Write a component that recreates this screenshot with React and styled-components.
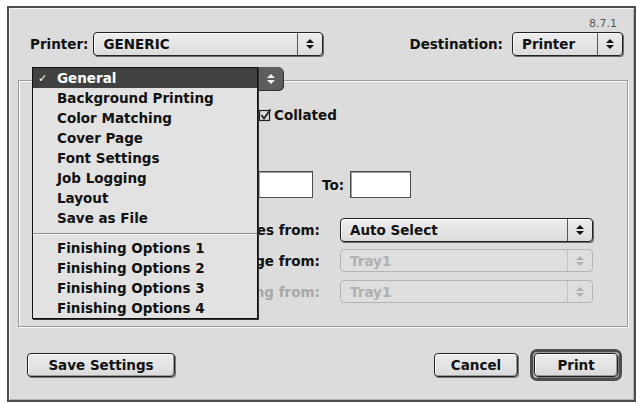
import React from 'react';
import styled, { createGlobalStyle } from 'styled-components';

const GlobalStyle = createGlobalStyle`
  body {
    margin: 0;
    background: #ffffff;
    font-family: "DejaVu Sans", "Liberation Sans", sans-serif;
    color: #111111;
  }
`;

const Window = styled.div`
  box-sizing: border-box;
  width: 629px;
  height: 396px;
  margin: 6px 0 0 7px;
  border: 2px solid #4c4c4c;
  background: #dcdcdc;
  box-shadow: inset 1px 1px 0 #f4f4f4, inset -1px -1px 0 #b0b0b0;
  display: flex;
  flex-direction: column;
`;

const VersionRow = styled.div`
  padding: 11px 17px 0 0;
  height: 10px;
  line-height: 10px;
  font-size: 11px;
  color: #555555;
  text-align: right;
`;

const TopRow = styled.div`
  display: flex;
  align-items: center;
  height: 24px;
  margin-top: 3px;
  padding: 0 11px 0 21px;
`;

const Label = styled.span`
  font-size: 13.5px;
  font-weight: bold;
  white-space: nowrap;
  color: ${(p) => (p.dim ? '#a8a8a8' : '#111111')};
  margin-right: ${(p) => p.gap || 0}px;
  margin-left: ${(p) => (p.push ? 'auto' : '0')};
  text-align: ${(p) => (p.right ? 'right' : 'left')};
`;

const PopupBox = styled.div`
  box-sizing: border-box;
  display: flex;
  align-items: stretch;
  width: ${(p) => p.width}px;
  height: ${(p) => (p.disabled ? 23 : 24)}px;
  border: 1px solid ${(p) => (p.disabled ? '#b4b4b4' : '#222222')};
  border-radius: 4px;
  background: ${(p) => (p.disabled ? '#dedede' : 'linear-gradient(#ededed, #dcdcdc)')};
  box-shadow: ${(p) => (p.disabled ? 'none' : '1px 1px 0 #6a6a6a, inset 1px 1px 0 #fafafa')};
  font-size: 13.5px;
  font-weight: bold;
  color: ${(p) => (p.disabled ? '#b0b0b0' : '#111111')};
`;

const PopupText = styled.div`
  flex: 1;
  display: flex;
  align-items: center;
  padding-left: 9px;
  white-space: nowrap;
`;

const PopupArrow = styled.div`
  width: 24px;
  display: flex;
  align-items: center;
  justify-content: center;
  border-left: 1px solid ${(p) => (p.disabled ? '#c4c4c4' : '#555555')};
`;

const Arrows = ({ color }) => (
  <svg width="8" height="12" viewBox="0 0 8 12">
    <polygon points="0,5 4,1 8,5" fill={color} />
    <polygon points="0,7 4,11 8,7" fill={color} />
  </svg>
);

const Popup = ({ width, value, disabled }) => (
  <PopupBox width={width} disabled={disabled}>
    <PopupText>{value}</PopupText>
    <PopupArrow disabled={disabled}>
      <Arrows color={disabled ? '#b0b0b0' : '#111111'} />
    </PopupArrow>
  </PopupBox>
);

const PanelArea = styled.div`
  position: relative;
  margin-top: 24px;
`;

const Panel = styled.div`
  box-sizing: border-box;
  height: 247px;
  margin: 0 6px 0 9px;
  border: 1px solid #9a9a9a;
  box-shadow: inset 1px 1px 0 #fafafa, 1px 1px 0 #fafafa;
  display: flex;
  flex-direction: column;
`;

const PanelRow = styled.div`
  display: flex;
  align-items: center;
  height: ${(p) => p.h}px;
  margin-top: ${(p) => p.top}px;
  padding-left: 21px;
`;

const Group = styled.div`
  width: ${(p) => p.width}px;
  display: flex;
  align-items: center;
  justify-content: flex-end;
  gap: 10px;
  padding-right: 10px;
  box-sizing: border-box;
`;

const Field = styled.div`
  box-sizing: border-box;
  width: ${(p) => p.width}px;
  height: ${(p) => p.h || 27}px;
  background: #ffffff;
  border: 1px solid #4a4a4a;
  box-shadow: inset 1px 1px 0 #a0a0a0;
  margin-right: ${(p) => p.gap || 0}px;
`;

const Radio = styled.span`
  box-sizing: border-box;
  width: 12px;
  height: 12px;
  border-radius: 50%;
  border: 1px solid #222;
  background: ${(p) => (p.on ? 'radial-gradient(#111 0 3px, #fff 3.5px)' : '#fff')};
`;

const CheckLabel = styled.label`
  display: flex;
  align-items: center;
  gap: 2px;
  font-size: 13.5px;
  font-weight: bold;
`;

const CheckIcon = () => (
  <svg width="14" height="14" viewBox="0 0 14 14">
    <rect x="1.5" y="2.5" width="10" height="10" fill="none" stroke="#222" strokeWidth="1.2" />
    <path d="M3.5 7 L6 10.5 L12.5 1.5" fill="none" stroke="#222" strokeWidth="1.8" />
  </svg>
);

const SourceGrid = styled.div`
  display: grid;
  grid-template-columns: 280px 253px;
  grid-auto-rows: 25px;
  column-gap: 20px;
  row-gap: 6px;
  margin-top: 20px;
  padding-left: 21px;
  align-items: start;

  & > span {
    line-height: 24px;
  }
`;

const PagePopup = styled.div`
  position: absolute;
  left: 23px;
  top: -13px;
  box-sizing: border-box;
  width: 251px;
  height: 23px;
  border-radius: 0 5px 5px 0;
  background: #4a4a4a;
  display: flex;
  justify-content: flex-end;
`;

const PagePopupArrow = styled.div`
  width: 25px;
  display: flex;
  align-items: center;
  justify-content: center;
  border-radius: 0 5px 5px 0;
  background: #5e5e5e;
  box-shadow: 1px 1px 0 #333;
`;

const Menu = styled.div`
  position: absolute;
  left: 23px;
  top: -13px;
  z-index: 2;
  box-sizing: border-box;
  width: 226px;
  background: #e2e2e2;
  border: 1px solid #111111;
  box-shadow: 1px 1px 0 #333333;
`;

const MenuItem = styled.div`
  display: flex;
  align-items: center;
  height: 20px;
  font-size: 13.5px;
  font-weight: bold;
  white-space: nowrap;
  background: ${(p) => (p.active ? '#414141' : 'transparent')};
  color: ${(p) => (p.active ? '#ffffff' : '#111111')};
`;

const CheckCell = styled.span`
  box-sizing: border-box;
  width: 24px;
  padding-left: 5px;
  font-size: 11px;
`;

const Separator = styled.div`
  height: 10px;
  display: flex;
  align-items: center;

  &::after {
    content: '';
    flex: 1;
    height: 1px;
    background: #8c8c8c;
    box-shadow: 0 1px 0 #f8f8f8;
  }
`;

const ButtonRow = styled.div`
  display: flex;
  align-items: center;
  height: 32px;
  margin-top: 22px;
  padding: 0 12px 0 18px;
`;

const Button = styled.button`
  box-sizing: border-box;
  width: ${(p) => p.width}px;
  height: 24px;
  margin-left: ${(p) => (p.push ? 'auto' : '0')};
  margin-right: ${(p) => p.gap || 0}px;
  border: 1px solid #222222;
  border-radius: 4px;
  background: linear-gradient(#ececec, #dadada);
  box-shadow: inset 1px 1px 0 #ffffff, inset -1px -1px 0 #9a9a9a, 1px 1px 0 #7a7a7a;
  font-family: "DejaVu Sans", "Liberation Sans", sans-serif;
  font-size: 13.5px;
  font-weight: bold;
  color: #111111;
  padding: 0;
`;

const DefaultRing = styled.div`
  display: flex;
  padding: 1px;
  border: 3px solid #4e4e4e;
  border-radius: 7px;
  box-shadow: inset 1px 1px 0 #999;
`;

const menuItems = [
  'General',
  'Background Printing',
  'Color Matching',
  'Cover Page',
  'Font Settings',
  'Job Logging',
  'Layout',
  'Save as File',
  '-',
  'Finishing Options 1',
  'Finishing Options 2',
  'Finishing Options 3',
  'Finishing Options 4',
];

export default function App() {
  return (
    <>
      <GlobalStyle />
      <Window>
        <VersionRow>8.7.1</VersionRow>
        <TopRow>
          <Label gap={5}>Printer:</Label>
          <Popup width={230} value="GENERIC" />
          <Label push gap={9}>Destination:</Label>
          <Popup width={111} value="Printer" />
        </TopRow>

        <PanelArea>
          <Panel>
            {/* copies field and page radios sit under the open menu */}
            <PanelRow h={20} top={24}>
              <Group width={218}>
                <Field width={40} h={22} />
              </Group>
              <CheckLabel>
                <CheckIcon />
                Collated
              </CheckLabel>
            </PanelRow>

            <PanelRow h={27} top={46}>
              <Group width={218}>
                <Radio on />
                <Radio />
              </Group>
              <Field width={55} gap={9} />
              <Label gap={6}>To:</Label>
              <Field width={61} />
            </PanelRow>

            <SourceGrid>
              <Label right>All pages from:</Label>
              <Popup width={253} value="Auto Select" />
              <Label right>First page from:</Label>
              <Popup width={253} value="Tray1" disabled />
              <Label right dim>Remaining from:</Label>
              <Popup width={253} value="Tray1" disabled />
            </SourceGrid>
          </Panel>

          <PagePopup>
            <PagePopupArrow>
              <Arrows color="#f2f2f2" />
            </PagePopupArrow>
          </PagePopup>

          <Menu>
            {menuItems.map((item, i) =>
              item === '-' ? (
                <Separator key={i} />
              ) : (
                <MenuItem key={i} active={i === 0}>
                  <CheckCell>{i === 0 ? '✓' : ''}</CheckCell>
                  {item}
                </MenuItem>
              )
            )}
          </Menu>
        </PanelArea>

        <ButtonRow>
          <Button width={148}>Save Settings</Button>
          <Button width={84} push gap={12}>Cancel</Button>
          <DefaultRing>
            <Button width={84}>Print</Button>
          </DefaultRing>
        </ButtonRow>
      </Window>
    </>
  );
}
